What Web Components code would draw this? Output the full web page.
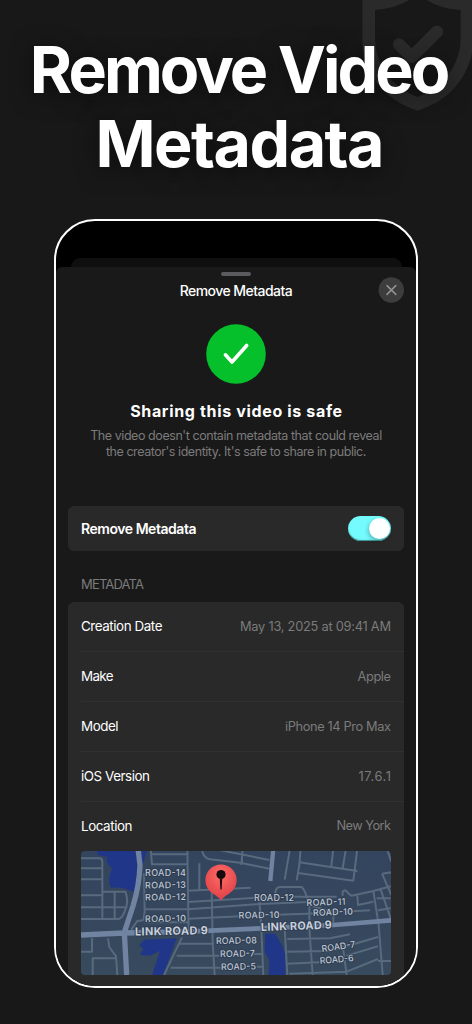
<!DOCTYPE html>
<html lang="en">
<head>
<meta charset="utf-8">
<title>Remove Video Metadata</title>
<style>
html,body{margin:0;background:#181818}
body{font-family:Inter,"Liberation Sans",sans-serif;color:#fff;width:472px;height:1024px;overflow:hidden}
</style>
</head>
<body>
<promo-page>
  <promo-title slot="title">
    <fit-text width="420.5">Remove Video</fit-text>
    <fit-text width="289">Metadata</fit-text>
  </promo-title>
  <phone-frame>
    <sheet-header><fit-text width="113">Remove Metadata</fit-text></sheet-header>
    <safe-status>
      <fit-text slot="title" width="212">Sharing this video is safe</fit-text>
      <fit-text width="292">The video doesn't contain metadata that could reveal</fit-text>
      <fit-text width="260.5">the creator's identity. It's safe to share in public.</fit-text>
    </safe-status>
    <toggle-card><fit-text width="115.5">Remove Metadata</fit-text></toggle-card>
    <section-label><fit-text width="63">METADATA</fit-text></section-label>
    <meta-list>
      <meta-row><fit-text width="81.5">Creation Date</fit-text><fit-text slot="value" width="151">May 13, 2025 at 09:41 AM</fit-text></meta-row>
      <meta-row><fit-text width="32.5">Make</fit-text><fit-text slot="value" width="33.5">Apple</fit-text></meta-row>
      <meta-row><fit-text width="37.5">Model</fit-text><fit-text slot="value" width="106">iPhone 14 Pro Max</fit-text></meta-row>
      <meta-row><fit-text width="69">iOS Version</fit-text><fit-text slot="value" width="32.5">17.6.1</fit-text></meta-row>
      <meta-row last><fit-text width="51.5">Location</fit-text><fit-text slot="value" width="54.5">New York</fit-text></meta-row>
      <location-map></location-map>
    </meta-list>
  </phone-frame>
</promo-page>
<script>
const define = (name, html, ready) => {
  const tpl = document.createElement('template');
  tpl.innerHTML = html;
  customElements.define(name, class extends HTMLElement {
    constructor() {
      super();
      this.attachShadow({mode: 'open'}).append(tpl.content.cloneNode(true));
    }
    connectedCallback() { if (ready) ready(this); }
  });
};

define('promo-page', `<style>
:host{display:flex;flex-direction:column;align-items:center;position:relative;width:472px;height:1024px;overflow:hidden;background:#181818}
svg{position:absolute;left:330px;top:0;z-index:0}
::slotted([slot=title]){z-index:1}
</style>
<svg width="144" height="120" viewBox="0 0 432 360" aria-hidden="true">
<path fill="#2a2a2a" fill-rule="evenodd" d="M97 -40V115C97 222 165 302 263 332C361 302 430 222 430 115V-40ZM135 30Q193 26 237 0L263 -16L290 0Q332 27 392 30V115C392 192 340 264 263 291C187 264 135 192 135 115Z"/>
<path d="M207 133L245 171L321 95" fill="none" stroke="#2a2a2a" stroke-width="37" stroke-linecap="round" stroke-linejoin="round"/>
</svg>
<slot name="title"></slot><slot></slot>`);

define('promo-title', `<style>
:host{display:flex;flex-direction:column;align-items:center;padding:34px 0 0 8px;height:185px;box-sizing:border-box;
font-size:64.5px;line-height:73.5px;font-weight:700;width:472px;
text-shadow:0 4px 22px rgba(0,0,0,.5)}
::slotted(*){flex:none}
</style><slot></slot>`);

define('phone-frame', `<style>
:host{display:block;box-sizing:border-box;width:364px;height:769px;margin:34px 0 0;border:2px solid #fff;border-radius:41px;background:#000;overflow:hidden}
.back{height:46px;margin:37px 14.5px 0;border-radius:9px;background:#0f0f0f}
.sheet{position:relative;margin-top:-37.5px;height:720px;background:#191919;border-radius:6px 6px 0 0;padding:0 11.7px 0 12px;box-sizing:border-box;display:flex;flex-direction:column}
</style><div class="back"></div><div class="sheet"><slot></slot></div>`);

define('sheet-header', `<style>
:host{display:grid;grid-template-columns:26px 1fr 26px;grid-template-rows:10.5px 25px;justify-items:center;align-items:center;height:38px;flex:none;font-size:14px;line-height:25px;font-weight:500}
i{grid-column:2;grid-row:1;width:30px;height:4.5px;border-radius:3px;background:#5a5a5f;align-self:end;margin-bottom:1px}
div{grid-column:2;grid-row:2;padding-top:1px}
svg{grid-column:3;grid-row:2}
</style><i></i><div><slot></slot></div>
<svg width="26" height="26" viewBox="0 0 26 26"><circle cx="13.3" cy="13" r="12.7" fill="#3d3d3d"/><path d="M9 8.6L17.8 17.4M17.8 8.6L9 17.4" stroke="#929292" stroke-width="1.5" stroke-linecap="round"/></svg>`);

define('safe-status', `<style>
:host{display:flex;flex-direction:column;align-items:center;height:201px;flex:none;padding-top:19px;box-sizing:border-box;color:#7b7b7b;font-size:12.5px;line-height:16.3px}
svg{flex:none;display:block}
.t{color:#fff;font-size:16px;font-weight:700;line-height:22px;margin:16px 0 6.7px}
</style>
<svg width="60" height="60" viewBox="0 0 60 60"><circle cx="30" cy="30" r="29.8" fill="#05c02b"/><path d="M19.4 30.8L26 38L40.7 21.5" fill="none" stroke="#fff" stroke-width="3.6" stroke-linecap="round" stroke-linejoin="round"/></svg>
<div class="t"><slot name="title"></slot></div><slot></slot>`);

define('toggle-card', `<style>
:host{display:flex;justify-content:space-between;align-items:center;flex:none;height:45.7px;box-sizing:border-box;padding:0 13.3px 0 13px;border-radius:6px;background:#292929;font-size:14px;font-weight:600;line-height:20px}
.l{padding-top:1.2px}
.s{width:43px;height:24.6px;border-radius:13px;background:#73fbfd;display:flex;justify-content:flex-end;align-items:center;padding-right:1.5px;box-sizing:border-box;box-shadow:inset 0 -1px 1px #3a8d90}
.k{width:21px;height:21px;border-radius:50%;background:#fff;box-shadow:-1px 2px 4px rgba(0,0,0,.25)}
</style><div class="l"><slot></slot></div><div class="s"><div class="k"></div></div>`);

define('section-label', `<style>
:host{display:flex;flex:none;height:50.7px;box-sizing:border-box;padding:23px 13px 0;color:#7b7b7b;font-size:13px;line-height:20px}
</style><slot></slot>`);

define('meta-list', `<style>
:host{display:flex;flex-direction:column;flex:1;background:#292929;border-radius:6px 6px 0 0}
</style><slot></slot>`);

define('meta-row', `<style>
:host{display:flex;justify-content:space-between;align-items:center;box-sizing:border-box;flex:none;height:50px;margin-left:13px;padding-right:13.3px;border-bottom:1px solid #313131;font-size:13.4px;line-height:20px;font-weight:400}
:host([last]){border-color:transparent;height:49px}
div{color:#7b7b7b;font-size:12.8px;font-weight:400;padding-top:1px}
</style><slot></slot><div><slot name="value"></slot></div>`);

define('fit-text', `<style>:host{display:block;white-space:nowrap;width:max-content}</style><slot></slot>`, el => {
  const n = [...el.textContent].length;
  el.style.letterSpacing = '0px';
  const gap = (Number(el.getAttribute('width')) - el.getBoundingClientRect().width) / (n - 1);
  el.style.letterSpacing = gap.toFixed(3) + 'px';
  el.style.marginRight = (-gap).toFixed(3) + 'px';
});

define('location-map', `<style>
:host{display:block;flex:none;width:310px;height:124px;margin:0 0 0 13px;border-radius:4px;overflow:hidden;background:linear-gradient(#33445e,#384a5d)}
svg{display:block}
.w{fill:#203789}
.r{fill:none;stroke:#586a7d;stroke-width:6;stroke-linejoin:round}
.m{fill:none;stroke:#7083a0;stroke-width:16}
text{font-family:Inter,sans-serif;font-size:9px;font-weight:500;fill:#bcc5d1;stroke:#2f3d52;stroke-width:2px;paint-order:stroke;stroke-linejoin:round}
.b{font-size:11px;font-weight:700;fill:#c6ceda}
</style>
<svg width="310" height="124" viewBox="0 0 310 124">
<defs><radialGradient id="g" cx=".5" cy=".3" r=".7"><stop offset="0" stop-color="#ff6c68"/><stop offset="1" stop-color="#de3f45"/></radialGradient></defs>
<g transform="translate(-5 -6) scale(.33333)">
<path class="w" d="M60 10H215L198 66L190 112L172 140Q140 124 106 128Q92 112 108 70Q84 50 96 36L66 30Z"/>
<path class="w" d="M205 284L302 280L262 390H228L252 318L222 332L192 330L202 312L190 300Z"/>
<path class="r" d="M15 40H72Q79 42 79 50V220M15 70H79M15 103H79M15 151H79M15 187H79M79 140H148Q160 170 146 200Q138 222 126 222H15M116 140V222M79 187H150M224 10L228 58H334M224 28H334M334 10L338 270M204 193H338M204 85L206 200L202 226M202 226L184 228L168 250V262M206 232H338M15 320H48V280M50 390V340H118M96 280L100 306L120 334L124 390M318 278L302 310L264 390M308 296H414M302 332H430M284 368H440"/>
<path class="m" d="M186 10L192 60Q190 120 172 180L145 262L152 390M15 270L145 264L338 260"/>
</g>
<g transform="translate(99 -1) scale(.33333)">
<path class="r" d="M66 0Q70 24 90 28L180 38L268 56M118 0L268 30M186 12V38M58 40V118M24 122L212 113M24 156L243 142M24 178L243 162M26 206L243 196M95 120L98 280L104 375M238 150L244 235L250 375M220 312H246M230 350H248"/>
<path class="m" style="stroke-width:14" d="M20 245L243 235"/>
</g>
<g transform="translate(149 -6) scale(.33333)">
<path class="w" d="M106 266H136L156 300L166 330V390H116L118 346L104 320Z"/>
<path class="r" d="M38 10L34 60M180 10L164 104M212 10L208 60L200 106M208 52L382 78M204 84L370 107L382 10M310 10L304 64M348 10L338 70M92 158H140M92 177L232 171M92 211L232 206L420 196M136 148Q136 126 150 126H214Q224 130 238 180V250L248 390M190 155H320M234 180L310 200V236M164 250L172 390M338 152V140Q346 130 356 146L364 152L430 138L482 124M382 152L384 180L430 170M430 138L446 240L458 390M452 134L482 220M440 160H482M444 196L482 190M470 10L484 50M456 86L484 82M456 86L484 150M172 282L300 280L360 268M172 320L300 318L444 276M172 356L268 352M178 386L350 380L444 342M350 332L444 304M338 300L350 390M444 348H484"/>
<path class="m" style="stroke-width:13" d="M130 10L121 108"/>
<path class="m" style="stroke-width:14" d="M90 250L310 240L484 226"/>
</g>
<text x="64" y="25" textLength="41">ROAD-14</text>
<text x="64" y="37.5" textLength="41" transform="rotate(-1 64 37)">ROAD-13</text>
<text x="64" y="49.5" textLength="41" transform="rotate(-1 64 49)">ROAD-12</text>
<text x="64" y="71" textLength="41" transform="rotate(-1 64 71)">ROAD-10</text>
<text class="b" x="54" y="84.5" textLength="73" transform="rotate(-1 54 84)">LINK ROAD 9</text>
<text x="173" y="49.5" textLength="40">ROAD-12</text>
<text x="225.5" y="55" textLength="39" transform="rotate(-2 225 54)">ROAD-11</text>
<text x="157.5" y="67.5" textLength="41" transform="rotate(-1 157 67)">ROAD-10</text>
<text x="232" y="65" textLength="40" transform="rotate(-2 232 65)">ROAD-10</text>
<text class="b" x="180" y="80" textLength="71" transform="rotate(-2 180 80)">LINK ROAD 9</text>
<text x="135" y="93" textLength="41" transform="rotate(-1 135 93)">ROAD-08</text>
<text x="139" y="106" textLength="35" transform="rotate(-1 139 106)">ROAD-7</text>
<text x="140" y="119" textLength="35" transform="rotate(-1 140 119)">ROAD-5</text>
<text x="241" y="101" textLength="34" transform="rotate(-8 241 101)">ROAD-7</text>
<text x="239" y="113" textLength="34" transform="rotate(-5 239 113)">ROAD-6</text>
<path fill="url(#g)" d="M140 13.4a15.600 15.600 0 0 1 15.600 15.600c0 9-6 13-10.500 15.500q-2.500 1.700-5.100 5.100q-2.600-3.400-5.100-5.100c-4.500-2.500-10.500-6.500-10.500-15.500a15.600 15.600 0 0 1 15.600-15.600z"/>
<circle cx="140" cy="23.5" r="4.6" fill="#150b0c"/><path d="M138.800 28h2.400l-.6 10.500h-1.200z" fill="#150b0c"/>
</svg>`);
</script>
</body>
</html>
